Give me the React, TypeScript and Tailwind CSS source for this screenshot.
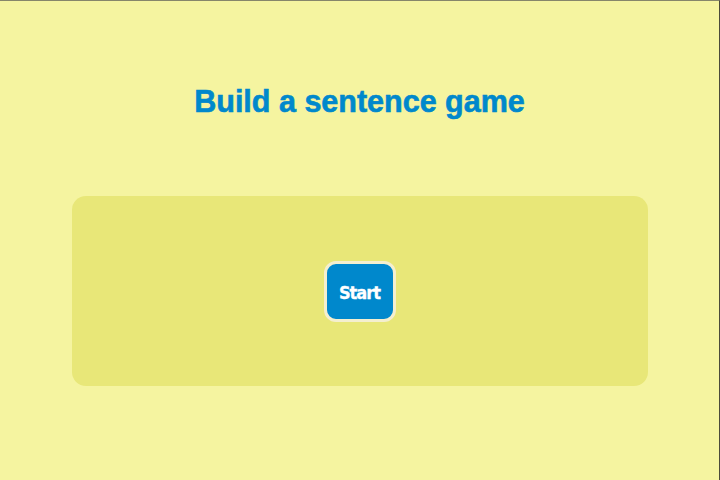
import React from 'react';

const App = () => {
  return (
    <div className="h-[480px] w-[720px] bg-[#f5f4a0] border-t border-t-[#86866a] border-r border-r-[#4a4a3a] flex flex-col items-center overflow-hidden">
      {/* Title */}
      <h1 className="mt-[82px] text-[30.5px] leading-[36px] font-bold [-webkit-text-stroke:0.6px_#0088cc] text-[#0088cc] [font-family:'Liberation_Sans',Arial,sans-serif]">
        Build a sentence game
      </h1>

      {/* Panel */}
      <div className="mt-[77px] w-[576px] h-[190px] rounded-[14px] bg-[#e8e778] flex items-center justify-center">
        <button className="w-[72px] h-[61px] rounded-[12px] bg-[#0088cc] border-[3px] border-[#f4efcf] text-white font-bold text-[18px] tracking-[-1px] leading-none pt-[3px] [-webkit-text-stroke:0.3px_#ffffff] [font-family:'DejaVu_Sans_Condensed','DejaVu_Sans',sans-serif]">
          Start
        </button>
      </div>
    </div>
  );
};

export default App;
